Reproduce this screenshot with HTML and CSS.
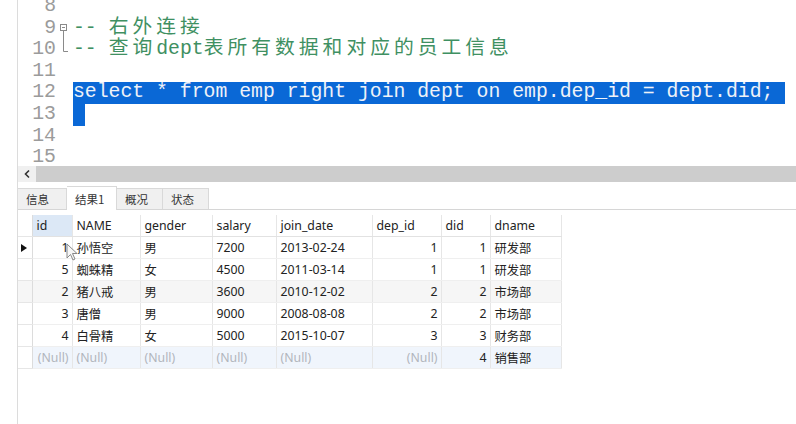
FILE: index.html
```html
<!DOCTYPE html>
<html>
<head>
<meta charset="utf-8">
<link rel="stylesheet" href="styles.css">
</head>
<body>
<div class="app">
  <div class="leftpad"></div>
  <div class="main">
    <div class="editor">
      <div class="lines">
        <div class="line"><span class="ln">8</span><span class="fold"></span><span class="code"></span></div>
        <div class="line"><span class="ln">9</span><span class="fold"><svg width="17" height="22" viewBox="0 0 17 22"><rect x="4.5" y="6.5" width="6" height="6" fill="#fff" stroke="#8a8a8a"/><line x1="6" y1="9.5" x2="9" y2="9.5" stroke="#8a8a8a"/><line x1="7.5" y1="12.5" x2="7.5" y2="22" stroke="#8a8a8a"/></svg></span><span class="code comment">-- <span class="cjk">右外连接</span></span></div>
        <div class="line"><span class="ln">10</span><span class="fold"><svg width="17" height="22" viewBox="0 0 17 22"><polyline points="7.5,0 7.5,12.5 12,12.5" fill="none" stroke="#8a8a8a"/></svg></span><span class="code comment">-- <span class="cjk">查询</span>dept<span class="cjk">表所有数据和对应的员工信息</span></span></div>
        <div class="line"><span class="ln">11</span><span class="fold"></span><span class="code"></span></div>
        <div class="line"><span class="ln">12</span><span class="fold"></span><span class="code"><span class="sel">select * from emp right join dept on emp.dep_id = dept.did; </span></span></div>
        <div class="line"><span class="ln">13</span><span class="fold"></span><span class="code"><span class="sel"> </span></span></div>
        <div class="line"><span class="ln">14</span><span class="fold"></span><span class="code"></span></div>
        <div class="line"><span class="ln">15</span><span class="fold"></span><span class="code"></span></div>
      </div>
    </div>
    <div class="hscroll">
      <span class="arrow"><svg width="8" height="10" viewBox="0 0 8 10"><polyline points="6,1.5 2.5,5 6,8.5" fill="none" stroke="#333" stroke-width="1.6"/></svg></span>
      <span class="thumb"></span>
    </div>
    <div class="tabs">
      <span class="tab t1">信息</span>
      <span class="tab active">结果1</span>
      <span class="tab">概况</span>
      <span class="tab">状态</span>
    </div>
    <table class="grid">
      <colgroup>
        <col class="c-ind"><col class="c-id"><col class="c-name"><col class="c-gender"><col class="c-salary"><col class="c-date"><col class="c-depid"><col class="c-did"><col class="c-dname">
      </colgroup>
      <thead>
        <tr><th class="ind"></th><th class="hsel">id</th><th>NAME</th><th>gender</th><th>salary</th><th>join_date</th><th>dep_id</th><th>did</th><th>dname</th></tr>
      </thead>
      <tbody>
        <tr><td class="ind"><span class="tri"></span></td><td class="num">1</td><td>孙悟空</td><td>男</td><td>7200</td><td>2013-02-24</td><td class="num">1</td><td class="num">1</td><td>研发部</td></tr>
        <tr><td class="ind"></td><td class="num">5</td><td>蜘蛛精</td><td>女</td><td>4500</td><td>2011-03-14</td><td class="num">1</td><td class="num">1</td><td>研发部</td></tr>
        <tr class="alt"><td class="ind"></td><td class="num">2</td><td>猪八戒</td><td>男</td><td>3600</td><td>2010-12-02</td><td class="num">2</td><td class="num">2</td><td>市场部</td></tr>
        <tr><td class="ind"></td><td class="num">3</td><td>唐僧</td><td>男</td><td>9000</td><td>2008-08-08</td><td class="num">2</td><td class="num">2</td><td>市场部</td></tr>
        <tr><td class="ind"></td><td class="num">4</td><td>白骨精</td><td>女</td><td>5000</td><td>2015-10-07</td><td class="num">3</td><td class="num">3</td><td>财务部</td></tr>
        <tr class="nullrow"><td class="ind"></td><td class="num null">(Null)</td><td class="null">(Null)</td><td class="null">(Null)</td><td class="null">(Null)</td><td class="null">(Null)</td><td class="num null">(Null)</td><td class="num">4</td><td>销售部</td></tr>
      </tbody>
    </table>
  </div>
</div>
<svg class="cursor" width="12" height="19" viewBox="0 0 12 19"><path d="M1 1 L1 15 L4.5 11.5 L7 17 L9 16 L6.5 10.5 L11 10.5 Z" fill="#f6f6f6" fill-opacity="0.85" stroke="#888" stroke-width="1" stroke-linejoin="round"/></svg>
</body>
</html>
```
FILE: styles.css
```css
html, body {
  margin: 0;
  padding: 0;
  background: #fff;
}
body {
  width: 796px;
  height: 424px;
  overflow: hidden;
  position: relative;
}
.app {
  display: flex;
  height: 424px;
}
.leftpad {
  width: 17px;
  flex: none;
}
.main {
  flex: 1;
  border-left: 1px solid #dcdcdc;
  display: flex;
  flex-direction: column;
  min-width: 0;
}
.editor {
  height: 166px;
  overflow: hidden;
  font-family: "Liberation Mono", "Noto Sans CJK SC", monospace;
  font-size: 19.8px;
}
.lines {
  margin-top: -4px;
}
.line {
  display: flex;
  height: 21.6px;
  line-height: 21.6px;
  white-space: pre;
}
.ln {
  width: 38px;
  text-align: right;
  color: #9b9b9b;
  flex: none;
}
.fold {
  width: 17px;
  flex: none;
  display: flex;
}
.code {
  color: #222;
}
.comment {
  color: #3f9062;
}
.cjk {
  letter-spacing: 4px;
}
.sel {
  display: inline-block;
  height: 21.6px;
  background: #0a68d6;
  color: #eef2f8;
}
.hscroll {
  height: 16px;
  display: flex;
  background: #f0f0f0;
}
.arrow {
  width: 18px;
  display: flex;
  align-items: center;
  justify-content: center;
}
.thumb {
  flex: 1;
  background: #cdcdcd;
}
.tabs {
  margin-top: 3px;
  height: 24px;
  display: flex;
  align-items: flex-end;
  border-bottom: 1px solid #d6d6d6;
  font-family: "Noto Sans CJK SC", sans-serif;
  font-size: 11.5px;
  color: #333;
}
.tab {
  height: 21px;
  line-height: 21px;
  padding-left: 8px;
  box-sizing: border-box;
  background: #f0f0f0;
  border: 1px solid #d9d9d9;
  border-bottom: none;
  border-left: none;
  width: 46px;
}
.tab.t1 {
  width: 49px;
}
.tab.active {
  background: #fff;
  width: 50px;
  height: 24px;
  line-height: 24px;
  border-top: 1px solid #d9d9d9;
  position: relative;
  top: 1px;
}
.grid {
  margin-top: 5px;
  border-collapse: collapse;
  table-layout: fixed;
  width: 543px;
  font-family: "Noto Sans", "Noto Sans CJK SC", sans-serif;
  font-size: 12.3px;
  color: #222;
}
.c-ind { width: 14px; }
.c-id { width: 40px; }
.c-name { width: 68px; }
.c-gender { width: 72px; }
.c-salary { width: 64px; }
.c-date { width: 96px; }
.c-depid { width: 69px; }
.c-did { width: 49px; }
.c-dname { width: 71px; }
.grid th, .grid td {
  height: 21px;
  padding: 0 4px 0 4px;
  text-align: left;
  font-weight: normal;
  border-right: 1px solid #e6e6e6;
  border-bottom: 1px solid #efefef;
  white-space: nowrap;
  overflow: hidden;
}
.grid th {
  background: #fff;
  border-bottom: 1px solid #e2e2e2;
}
.grid th.hsel {
  background: #dce8f6;
}
.grid .ind {
  padding: 0;
  border-right: 1px solid #dcdcdc;
  border-bottom: 1px solid #e6e6e6;
  position: relative;
}
.grid td.num {
  text-align: right;
  padding-right: 3px;
}
.grid tr.alt td {
  background: #f6f6f6;
}
.grid tr.nullrow td {
  background: #f0f5fc;
}
.grid tr.nullrow td.ind {
  background: #fff;
}
.grid td.null {
  color: #b2b6bc;
}
.tri {
  display: block;
  width: 0;
  height: 0;
  margin-left: 3px;
  border-top: 4.5px solid transparent;
  border-bottom: 4.5px solid transparent;
  border-left: 6px solid #111;
}
.cursor {
  position: absolute;
  left: 66px;
  top: 243px;
}
```
